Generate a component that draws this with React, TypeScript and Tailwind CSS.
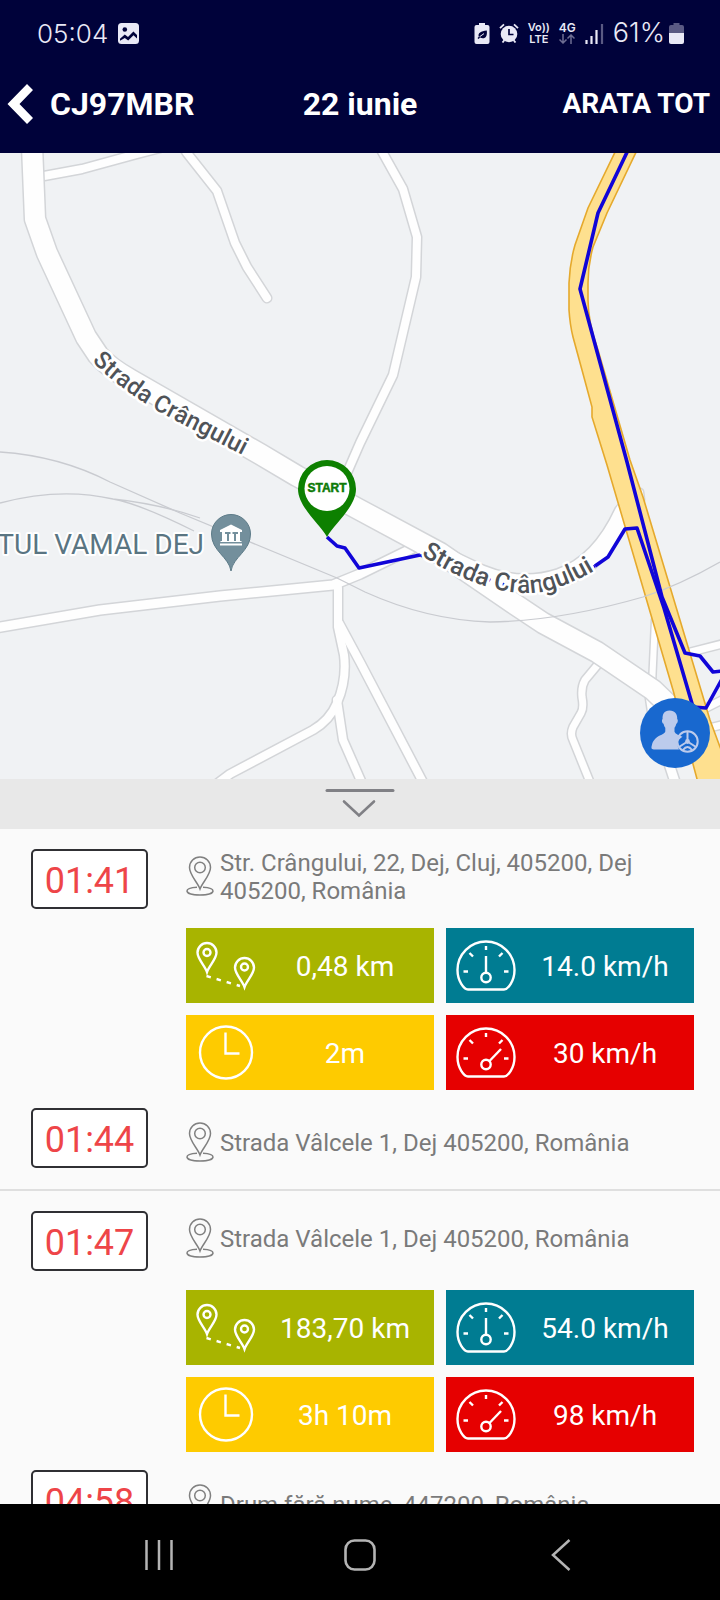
import type { ReactNode } from "react";

type Trip = {
  start: string;
  startAddress: string;
  distance: string;
  duration: string;
  average: string;
  top: string;
  end: string;
  endAddress: string;
};

const trips: Trip[] = [
  {
    start: "01:41",
    startAddress: "Str. Crângului, 22, Dej, Cluj, 405200, Dej 405200, România",
    distance: "0,48 km",
    duration: "2m",
    average: "14.0 km/h",
    top: "30 km/h",
    end: "01:44",
    endAddress: "Strada Vâlcele 1, Dej 405200, România",
  },
  {
    start: "01:47",
    startAddress: "Strada Vâlcele 1, Dej 405200, România",
    distance: "183,70 km",
    duration: "3h 10m",
    average: "54.0 km/h",
    top: "98 km/h",
    end: "04:58",
    endAddress: "Drum fără nume, 447200, România",
  },
];

function StatusBar() {
  return (
    <div className="flex h-16 items-center justify-between pt-[2px] pr-[36px] pl-[37px] font-[Inter,sans-serif] text-[#e9e9f6]">
      <div className="flex items-center gap-[10px]">
        <span className="text-[26px] font-light">05:04</span>
        <svg className="size-[21px]" viewBox="0 0 21 21" aria-hidden="true">
          <rect width="21" height="21" rx="3.500" fill="currentColor" />
          <circle cx="6.800" cy="6.500" r="2.300" fill="#00023a" />
          <path d="M2 15.800 6.800 11.400l3.200 2.500 5.400-5.500L19 12v3.500l-3.500-3.200-5.300 5.200-3.400-2.500L2 17.800z" fill="#00023a" />
        </svg>
      </div>
      <div className="flex items-center gap-[9px]">
        <svg className="h-[21px] w-[16px]" viewBox="0 0 16 21" aria-hidden="true">
          <path d="M5 0h6v2h2.500A2 2 0 0 1 15.500 4v15a2 2 0 0 1-2 2h-11a2 2 0 0 1-2-2V4a2 2 0 0 1 2-2H5z" fill="currentColor" />
          <path d="M12.800 7.500c.6 5-.8 7.800-4 7.800-1 0-1.900-.3-2.500-.8L4.500 16l-1-1 1.300-1.300C3.500 9.800 7 8.300 12.800 7.500z" fill="#00023a" />
          <path d="M5.500 13.800 10 10.600" stroke="currentColor" strokeWidth="1" />
        </svg>
        <svg className="h-[20px] w-[20px]" viewBox="0 0 20 20" aria-hidden="true">
          <circle cx="10" cy="11" r="8.300" fill="currentColor" />
          <path d="M1 5.200 5 1.300M19 5.200l-4-3.900M3.500 19.500l2-2.500M16.500 19.500l-2-2.500" stroke="currentColor" strokeWidth="1.800" />
          <path d="M10 6v5.500h4.500" stroke="#00023a" strokeWidth="1.700" fill="none" />
        </svg>
        <div className="flex flex-col items-center text-[11px] leading-3 font-semibold">
          <span>Vo))</span>
          <span>LTE</span>
        </div>
        <div className="flex flex-col items-center">
          <span className="text-[12px] leading-3 font-semibold">4G</span>
          <svg className="h-[10px] w-[16px]" viewBox="0 0 16 10" fill="none" stroke="#6d6d92" strokeWidth="1.500" aria-hidden="true">
            <path d="M4 0v9M.5 5.500 4 9l3.500-3.500M12 10V1M8.500 4.500 12 1l3.500 3.500" />
          </svg>
        </div>
        <svg className="h-[21px] w-[19px]" viewBox="0 0 19 21" aria-hidden="true">
          <path d="M1.500 17v4M6.500 13v8M11.500 7v14" stroke="currentColor" strokeWidth="2.200" />
          <path d="M17 1v20" stroke="#5a5a83" strokeWidth="2.200" />
        </svg>
        <div className="flex items-center gap-1">
          <span className="text-[27px] font-light">61%</span>
          <svg className="h-[21px] w-[15px]" viewBox="0 0 15 21" aria-hidden="true">
            <path d="M4.500 0h6v2h2.500a2 2 0 0 1 2 2v6H0V4a2 2 0 0 1 2-2h2.500z" fill="#5a5a83" />
            <path d="M0 10h15v9a2 2 0 0 1-2 2H2a2 2 0 0 1-2-2z" fill="currentColor" />
          </svg>
        </div>
      </div>
    </div>
  );
}

function TitleBar() {
  return (
    <div className="grid h-[89px] grid-cols-[1fr_auto_1fr] items-center px-[10px] pb-[9px] font-bold text-white">
      <button type="button" className="-ml-1 flex items-center gap-[17px] text-left text-[32px] leading-10">
        <svg className="h-10 w-[27px]" viewBox="0 0 27 40" aria-hidden="true">
          <path d="M21 0 27 6 13.500 20 27 34 21 40 1.500 20z" fill="currentColor" />
        </svg>
        CJ97MBR
      </button>
      <h1 className="text-[32px] leading-10">22 iunie</h1>
      <button type="button" className="justify-self-end text-[28px] leading-10">ARATA TOT</button>
    </div>
  );
}

const localRoads = [
  { d: "M44 176 82 169 137 154 160 148", w: 11 },
  { d: "M183 147 187 153 217 191 235 243 247 267 267 298", w: 11 },
  { d: "M379 146 403 189 417 237 416 277 393 375 360 443 343 482", w: 11 },
  { d: "M-5 628 100 610 220 596 333 585 360 574 413 548 425 545", w: 12 },
  { d: "M338 588V627L344 655Q347 680 337 703 330 720 313 730L230 774 214 786", w: 11 },
  { d: "M337 700 343 740 365 790", w: 11 },
  { d: "M339 623 360 662 426 788", w: 11 },
  { d: "M600 662 585 680Q581 687 582 697 584 708 581 713L573 727Q570 734 573 740L594 792", w: 10 },
  { d: "M655 620 652 685", w: 9 },
  { d: "M650 695 653 715 676 785", w: 12 },
  { d: "M683 654 726 643", w: 10 },
  { d: "M700 711 726 698", w: 10 },
  { d: "M705 729 726 724", w: 10 },
  { d: "M640 492 641 500", w: 9 },
];

const mainRoads = [
  { d: "M32 146 35 219 47 253 86 337 98 355Q108 367 131 380L260 454 297 476 360 510 440 553 513 603 543 623 597 652 653 690 680 716", w: 23 },
  { d: "M425 548 480 574Q520 591 560 578 600 564 624 512", w: 21 },
];

function Roads({ roads }: { roads: { d: string; w: number }[] }) {
  return (
    <g fill="none" strokeLinecap="round" strokeLinejoin="round">
      {roads.map((r) => (
        <path key={r.d} d={r.d} stroke="#d3d5d8" strokeWidth={r.w} />
      ))}
      {roads.map((r) => (
        <path key={r.d} d={r.d} stroke="#fefefe" strokeWidth={r.w - 3} />
      ))}
    </g>
  );
}

function MapView() {
  return (
    <section className="relative aspect-[720/626] w-full shrink-0 overflow-hidden bg-[#f0f2f4]" aria-label="Hartă">
      <svg className="block size-full" viewBox="0 153 720 626" preserveAspectRatio="xMidYMid slice">
        <defs>
          <path id="label-west" d="M92 361 Q112 382 143 402 Q160 413 190 428 L262 465" />
          <path id="label-east" d="M421 555 Q455 577 485 586 Q530 600 562 586 Q585 578 614 558" />
        </defs>
        <Roads roads={localRoads} />
        <Roads roads={mainRoads} />
        <path
          d="M618 146 588 208 575 245Q570 262 569 283V310Q570 325 573 337L582 370 592 407V417L607 465 673 690 700 790H740L720 747 710 720 643 497 630 460 598 350Q588 322 588 300V283Q588 265 593 247L607 213 639 146Z"
          fill="#fee08f"
          stroke="#e5a92c"
          strokeWidth="1.600"
        />
        <g fill="none" stroke="#c9cbd0" strokeWidth="1.300">
          <path d="M0 452Q60 456 110 482L180 513 337 578 365 592Q427 620 490 622 560 621 643 597 680 585 720 562" />
          <path d="M0 503Q60 487 113 499 140 504 194 531M113 499Q160 504 200 518" />
        </g>
        <g fill="none" stroke="#1105d8" strokeWidth="3.600" strokeLinejoin="round">
          <path d="M630 146 598 213 580 289 627 462 662 597 685 653 700 656 713 672 722 671" />
          <path d="M722 679 706 708 693 707 664 608 637 528 625 529 608 557 595 566" />
          <path d="M420 555 359 568 345 548 337 546 327 537" />
          <path d="M420 555 455 571 490 580 502 584 530 589 562 583 595 566" strokeDasharray="3 5" strokeWidth="3" />
        </g>
        <g
          className="font-[Roboto,sans-serif] font-medium"
          fill="#4f5358"
          stroke="#ffffff"
          strokeWidth="5"
          strokeLinejoin="round"
          paintOrder="stroke"
        >
          <text className="text-[24px]"><textPath href="#label-west">Strada Crângului</textPath></text>
          <text className="text-[25px]"><textPath href="#label-east">Strada Crângului</textPath></text>
        </g>
        <text
          x="204"
          y="554"
          textAnchor="end"
          className="font-[Roboto,sans-serif] text-[28px]"
          fill="#5a7582"
          stroke="#ffffff"
          strokeWidth="4"
          strokeLinejoin="round"
          paintOrder="stroke"
        >
          TUL VAMAL DEJ
        </text>
        <path d="M231 571 C229 557 211.500 551 211.500 534 A19.500 19.500 0 0 1 250.500 534 C250.500 551 233 557 231 571Z" fill="#738f9c" stroke="#5d7b88" />
        <path d="M231 524.500 242 530v2h-2v9h1.500v1h-21v-1h1.500v-9h-2v-2z" fill="#fff" />
        <path d="M220 544.500h22" stroke="#fff" strokeWidth="2" />
        <path d="M225 532h5.500v2h-1.500v7h-2v-7h-2zM232.500 532h5.500v2h-2v7h-2v-7h-1.500z" fill="#738f9c" />
        <path d="M327 537 C320 524 298 507 298 489 A29 29 0 0 1 356 489 C356 507 334 524 327 537Z" fill="#0d8000" />
        <circle cx="327" cy="488.500" r="22.500" fill="#fff" />
        <text x="327" y="492" textAnchor="middle" className="font-['Liberation_Sans',sans-serif] text-[12px] font-bold" fill="#0d7a06" stroke="#0d7a06" strokeWidth=".5">
          START
        </text>
      </svg>
      <button type="button" aria-label="Șofer" className="absolute right-[10px] bottom-[11px] size-[70px] rounded-full bg-[#1868cf]">
        <svg className="size-full" viewBox="0 0 70 70" aria-hidden="true">
          <path
            d="M29.500 12.500c5.500 0 8 3.800 7.700 8.500 1.200 1 .5 4.300-.9 4.800-.4 1.800-1 3-1.800 4v4c1 2.500 5 3.500 8 5-5 3-6 8-3.500 12.700H15c-3.500 0-4-1-3.200-4 1-5 4-8 8-10 2.500-1.200 5-2 5.500-4v-3.700c-.9-1-1.400-2.200-1.700-4-1.600-.6-2.200-3.800-1-4.800-.3-4.700 1.500-8.500 6.900-8.500z"
            fill="#bccbec"
          />
          <g fill="none" stroke="#bccbec" strokeWidth="2">
            <circle cx="47.500" cy="43.500" r="10.200" />
            <path d="M47.500 33.500v9M39 49l7-4.500M56 49l-7-4.500M43 52q4.500-6 9 0" />
          </g>
          <circle cx="47.500" cy="43.500" r="2.400" fill="#bccbec" />
        </svg>
      </button>
    </section>
  );
}

function PlacePin() {
  return (
    <svg className="h-10 w-7 shrink-0" viewBox="0 0 28 40" fill="none" stroke="#808080" strokeWidth="1.500" aria-hidden="true">
      <path d="M14 33C12 27 3.500 19 3.500 11.500A10.500 10.500 0 0 1 24.500 11.500C24.500 19 16 27 14 33Z" />
      <circle cx="14" cy="11.500" r="5.300" />
      <path d="M11 31.300C5 31.600 1 33 1 35c0 2.300 5.500 4 13 4s13-1.700 13-4c0-2-4-3.400-10-3.700" />
    </svg>
  );
}

function DistanceIcon() {
  return (
    <>
      <path d="M21 44C19 38 11.500 31 11.500 24.500A9.500 9.500 0 0 1 30.500 24.500C30.500 31 23 38 21 44Z" />
      <circle cx="21" cy="24.500" r="3.500" />
      <path d="M58.500 59C56.500 53 49 46 49 39.500A9.500 9.500 0 0 1 68 39.500C68 46 60.500 53 58.500 59Z" />
      <circle cx="58.500" cy="39" r="3.500" />
      <path d="M20.500 48 54 58" strokeDasharray="4.500 6" />
    </>
  );
}

function ClockIcon() {
  return (
    <>
      <circle cx="40" cy="37.500" r="26" />
      <path d="M39.500 17.500V38.500H53.500" />
    </>
  );
}

function GaugeIcon({ fast = false }: { fast?: boolean }) {
  return (
    <>
      <path d="M22 61.500C18 61.500 11.500 53 11.500 42A28.500 28.500 0 0 1 68.500 42C68.500 53 62 61.500 58 61.500Z" />
      <path d="M40 18v4M23.500 25l3.500 3.500M56.500 25 53 28.500M17.500 43.500H22M58 43.500h4.500" />
      <circle cx="40" cy="49.500" r="4.700" />
      <path d={fast ? "M43.500 46 55 34" : "M40 28v16.500"} />
    </>
  );
}

function Tile({ color, icon, children }: { color: string; icon: ReactNode; children: ReactNode }) {
  return (
    <div className={`flex h-[75px] items-center text-white ${color}`}>
      <svg className="h-[75px] w-[70px] shrink-0" viewBox="0 0 70 75" fill="none" stroke="currentColor" strokeWidth="2.400" aria-hidden="true">
        {icon}
      </svg>
      <span className="flex-1 pt-[2px] text-center text-[28px] leading-8">{children}</span>
    </div>
  );
}

function Stop({ time, address, size }: { time: string; address: string; size: string }) {
  return (
    <div className="flex items-start">
      <div className="w-[186px] shrink-0 pl-[31px]">
        <time className="flex h-[60px] w-[117px] items-center justify-center rounded-[5px] border-2 border-[#303034] bg-white pt-1 text-[36px] leading-10 text-[#ee4548]">
          {time}
        </time>
      </div>
      <div className={`flex min-w-0 flex-1 items-center gap-[6px] ${size}`}>
        <PlacePin />
        <p className="pt-[2px] text-[24px] leading-7 text-[#7a7a7a]">{address}</p>
      </div>
    </div>
  );
}

function TripItem({ trip }: { trip: Trip }) {
  return (
    <li className="border-b-2 border-[#dfdfdf] pt-5 pr-[26px] pb-[14px]">
      <Stop time={trip.start} address={trip.startAddress} size="h-[54px]" />
      <div className="mt-[19px] ml-[186px] grid grid-cols-2 gap-3">
        <Tile color="bg-[#a8b400]" icon={<DistanceIcon />}>{trip.distance}</Tile>
        <Tile color="bg-[#007c92]" icon={<GaugeIcon />}>{trip.average}</Tile>
        <Tile color="bg-[#fecb00]" icon={<ClockIcon />}>{trip.duration}</Tile>
        <Tile color="bg-[#e60000]" icon={<GaugeIcon fast />}>{trip.top}</Tile>
      </div>
      <div className="mt-[18px]">
        <Stop time={trip.end} address={trip.endAddress} size="h-[67px]" />
      </div>
    </li>
  );
}

function SystemNav() {
  return (
    <nav className="grid h-24 shrink-0 grid-cols-3 place-items-center bg-black px-[58px] pt-[6px] text-[#b4b4b4]">
      <button type="button" aria-label="Recente">
        <svg className="size-8" viewBox="0 0 32 32" stroke="currentColor" strokeWidth="2.500" aria-hidden="true">
          <path d="M3.500 1v30M16 1v30M28.500 1v30" />
        </svg>
      </button>
      <button type="button" aria-label="Acasă">
        <svg className="size-8" viewBox="0 0 32 32" fill="none" stroke="currentColor" strokeWidth="2.600" aria-hidden="true">
          <rect x="1.500" y="1.500" width="29" height="29" rx="9" />
        </svg>
      </button>
      <button type="button" aria-label="Înapoi">
        <svg className="size-8" viewBox="0 0 32 32" fill="none" stroke="currentColor" strokeWidth="2.500" aria-hidden="true">
          <path d="M24.500 1 8 16 24.500 31" />
        </svg>
      </button>
    </nav>
  );
}

export default function App() {
  return (
    <div className="flex h-screen flex-col overflow-hidden bg-[#fafafa] font-[Roboto,sans-serif]">
      <header className="shrink-0 bg-[#00023a]">
        <StatusBar />
        <TitleBar />
      </header>
      <MapView />
      <button type="button" aria-label="Ascunde lista" className="flex h-[50px] shrink-0 items-start justify-center bg-[#e8e8e8] pt-[9px]">
        <svg className="h-[30px] w-[70px]" viewBox="0 0 70 30" fill="none" stroke="#808085" strokeWidth="3" strokeLinecap="round" aria-hidden="true">
          <path d="M2 2.500h66" />
          <path d="M19 13.500 34 27.500 49 13.500" strokeWidth="2.600" />
        </svg>
      </button>
      <ul className="min-h-0 flex-1 overflow-hidden">
        {trips.map((trip) => (
          <TripItem key={trip.start} trip={trip} />
        ))}
      </ul>
      <SystemNav />
    </div>
  );
}
